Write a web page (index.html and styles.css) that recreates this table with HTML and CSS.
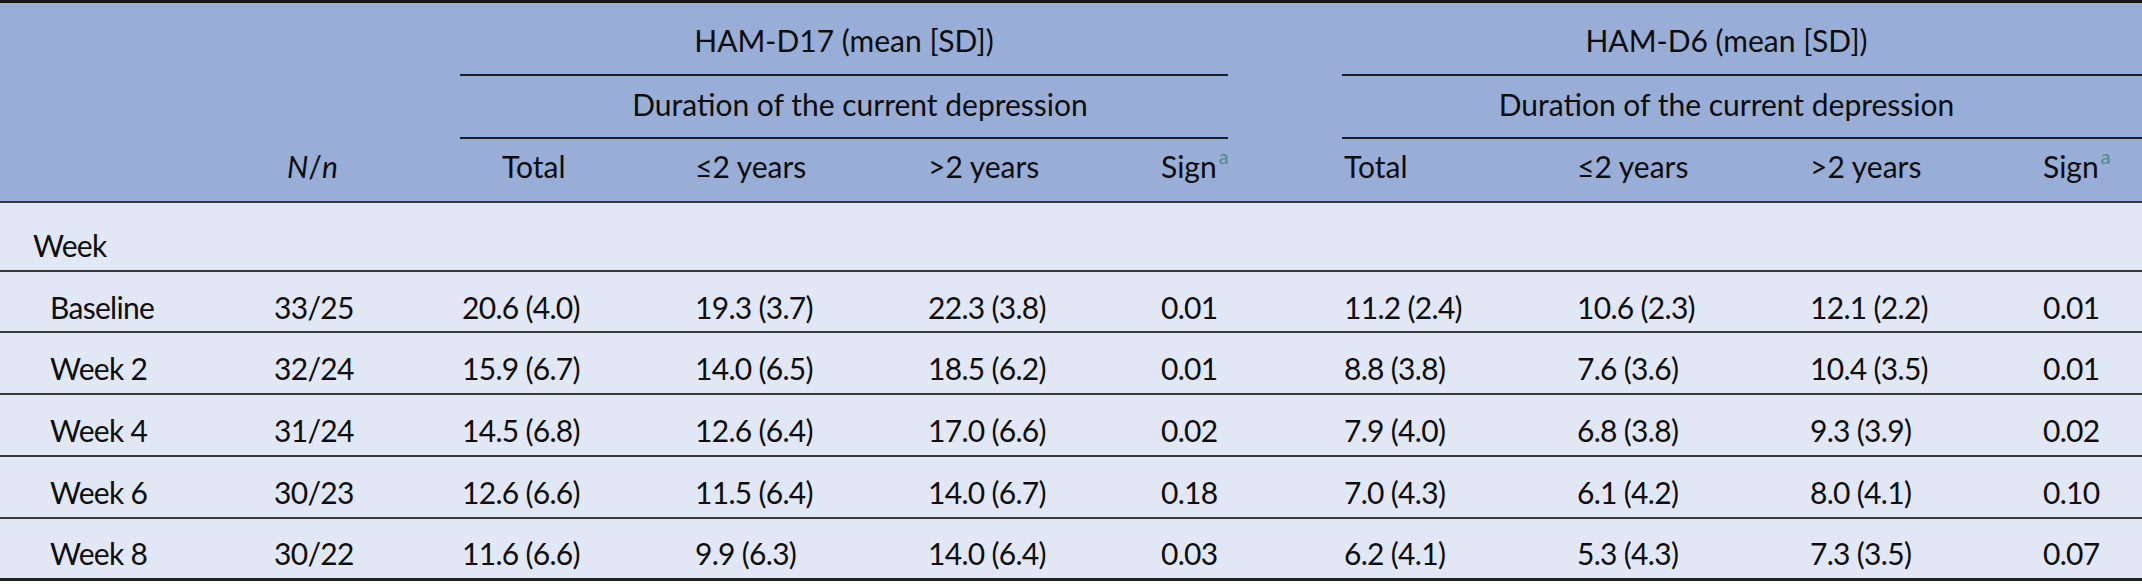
FILE: index.html
```html
<!DOCTYPE html>
<html lang="en">
<head>
<meta charset="utf-8">
<title>HAM-D table</title>
<link rel="stylesheet" href="styles.css">
</head>
<body>
<table class="tbl">
  <colgroup>
    <col class="c-label">
    <col class="c-n">
    <col class="c-val">
    <col class="c-val">
    <col class="c-val">
    <col class="c-sign1">
    <col class="c-gap">
    <col class="c-val">
    <col class="c-val">
    <col class="c-val">
    <col class="c-sign2">
  </colgroup>
  <thead>
    <tr class="h1">
      <th></th>
      <th></th>
      <th colspan="4" class="grp g1">HAM-D17 (mean [SD])</th>
      <th></th>
      <th colspan="4" class="grp g2">HAM-D6 (mean [SD])</th>
    </tr>
    <tr class="h2">
      <th></th>
      <th></th>
      <th colspan="4" class="grp g1 dur1">Duration of the current depression</th>
      <th></th>
      <th colspan="4" class="grp g2">Duration of the current depression</th>
    </tr>
    <tr class="h3">
      <th></th>
      <th class="nn"><i>N</i>/<i>n</i></th>
      <th class="tot1">Total</th>
      <th>≤2 years</th>
      <th>&gt;2 years</th>
      <th>Sign<sup class="fn">a</sup></th>
      <th></th>
      <th>Total</th>
      <th>≤2 years</th>
      <th>&gt;2 years</th>
      <th>Sign<sup class="fn">a</sup></th>
    </tr>
  </thead>
  <tbody>
    <tr class="r-week">
      <td class="lbl">Week</td>
      <td></td><td></td><td></td><td></td><td></td><td></td><td></td><td></td><td></td><td></td>
    </tr>
    <tr class="r-first">
      <td class="sub">Baseline</td>
      <td>33/25</td>
      <td>20.6 (4.0)</td>
      <td>19.3 (3.7)</td>
      <td>22.3 (3.8)</td>
      <td>0.01</td>
      <td></td>
      <td>11.2 (2.4)</td>
      <td>10.6 (2.3)</td>
      <td>12.1 (2.2)</td>
      <td>0.01</td>
    </tr>
    <tr>
      <td class="sub">Week 2</td>
      <td>32/24</td>
      <td>15.9 (6.7)</td>
      <td>14.0 (6.5)</td>
      <td>18.5 (6.2)</td>
      <td>0.01</td>
      <td></td>
      <td>8.8 (3.8)</td>
      <td>7.6 (3.6)</td>
      <td>10.4 (3.5)</td>
      <td>0.01</td>
    </tr>
    <tr>
      <td class="sub">Week 4</td>
      <td>31/24</td>
      <td>14.5 (6.8)</td>
      <td>12.6 (6.4)</td>
      <td>17.0 (6.6)</td>
      <td>0.02</td>
      <td></td>
      <td>7.9 (4.0)</td>
      <td>6.8 (3.8)</td>
      <td>9.3 (3.9)</td>
      <td>0.02</td>
    </tr>
    <tr>
      <td class="sub">Week 6</td>
      <td>30/23</td>
      <td>12.6 (6.6)</td>
      <td>11.5 (6.4)</td>
      <td>14.0 (6.7)</td>
      <td>0.18</td>
      <td></td>
      <td>7.0 (4.3)</td>
      <td>6.1 (4.2)</td>
      <td>8.0 (4.1)</td>
      <td>0.10</td>
    </tr>
    <tr class="r-last">
      <td class="sub">Week 8</td>
      <td>30/22</td>
      <td>11.6 (6.6)</td>
      <td>9.9 (6.3)</td>
      <td>14.0 (6.4)</td>
      <td>0.03</td>
      <td></td>
      <td>6.2 (4.1)</td>
      <td>5.3 (4.3)</td>
      <td>7.3 (3.5)</td>
      <td>0.07</td>
    </tr>
  </tbody>
</table>
</body>
</html>
```

FILE: styles.css
```css
html, body {
  margin: 0;
  padding: 0;
  background: #ffffff;
}

.tbl {
  width: 2142px;
  table-layout: fixed;
  border-collapse: separate;
  border-spacing: 0;
  border-top: 3px solid #151515;
  font-family: Lato, "Open Sans", "Liberation Sans", sans-serif;
  font-size: 30px;
  line-height: 1.2;
  color: #0d0d0d;
}

.c-label { width: 272px; }
.c-n { width: 188px; }
.c-val { width: 233px; }
.c-sign1 { width: 69px; }
.c-gap { width: 114px; }
.c-sign2 { width: 102px; }

.tbl th,
.tbl td {
  box-sizing: border-box;
  padding: 0 2px;
  text-align: left;
  font-weight: 400;
  white-space: nowrap;
  vertical-align: middle;
}

.tbl thead th {
  background: #98aed7;
}

.tbl tbody td {
  background: #e1e7f4;
  padding-top: 9px;
  letter-spacing: -0.7px;
  border-bottom: 2px solid #3a3a3a;
}

.h1 th {
  height: 73px;
  padding-top: 3px;
}
.h2 th {
  height: 63px;
  padding-bottom: 6px;
}
.h3 th {
  height: 64px;
  padding-bottom: 8px;
  border-bottom: 2px solid #3a3a3a;
}

.tbl th.grp {
  text-align: center;
  border-bottom: 2px solid #1e1e1e;
}

.tbl th.dur1 {
  padding-left: 34px;
}

.tbl th.g2 {
  padding-right: 34px;
}

.tbl th.nn {
  padding-left: 15px;
}

.tbl th.tot1 {
  padding-left: 42px;
}

.tbl tbody tr td { height: 62px; }
.tbl tbody tr.r-week td {
  height: 69px;
  padding-top: 16px;
}
.tbl tbody tr.r-first td {
  height: 61px;
  padding-top: 11px;
}
.tbl tbody tr.r-last td {
  height: 62px;
  border-bottom: 3px solid #222222;
}

.tbl td.lbl { padding-left: 33px; }
.tbl td.sub { padding-left: 50px; }

.fn {
  color: #4f8b8c;
  font-size: 0.66em;
  vertical-align: 0.7em;
  line-height: 0;
  margin-left: 2px;
}
```
